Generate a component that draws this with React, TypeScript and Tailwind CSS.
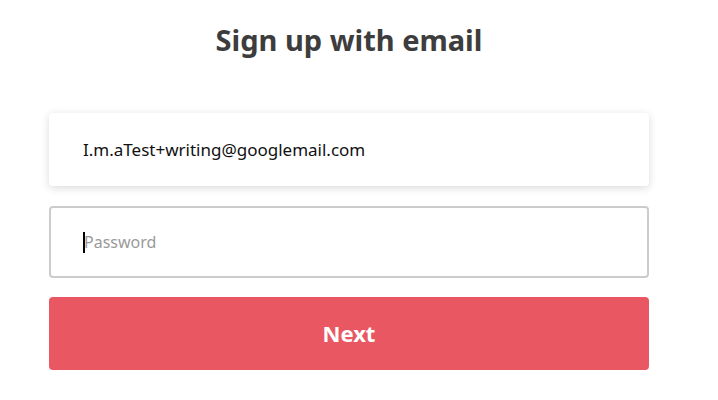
export default function App() {
  return (
    <div
      className="w-[718px] h-[400px] bg-white"
      style={{ fontFamily: '"Noto Sans", "Open Sans", sans-serif' }}
    >
      <div className="ml-[49px] w-[600px] flex flex-col">
        <h1 className="h-[82px] pt-[20px] text-center text-[29px] font-bold leading-[40px] text-[#3d3d3d]">
          Sign up with email
        </h1>
        <div className="mt-[31px] h-[73px] flex items-center rounded-[4px] bg-white pl-[34px] text-[17px] text-[#111] shadow-[0_2px_8px_rgba(0,0,0,0.15)]">
          I.m.aTest+writing@googlemail.com
        </div>
        <div className="mt-[20px] h-[72px] flex items-center rounded-[4px] border-2 border-[#cccccc] pl-[32px] text-[16px] text-[#9a9a9a]">
          <span className="w-[2px] h-[21px] bg-black -mr-[1px]" />
          Password
        </div>
        <button className="mt-[19px] h-[73px] rounded-[4px] bg-[#e95763] text-[22px] font-bold text-white">
          Next
        </button>
      </div>
    </div>
  );
}
